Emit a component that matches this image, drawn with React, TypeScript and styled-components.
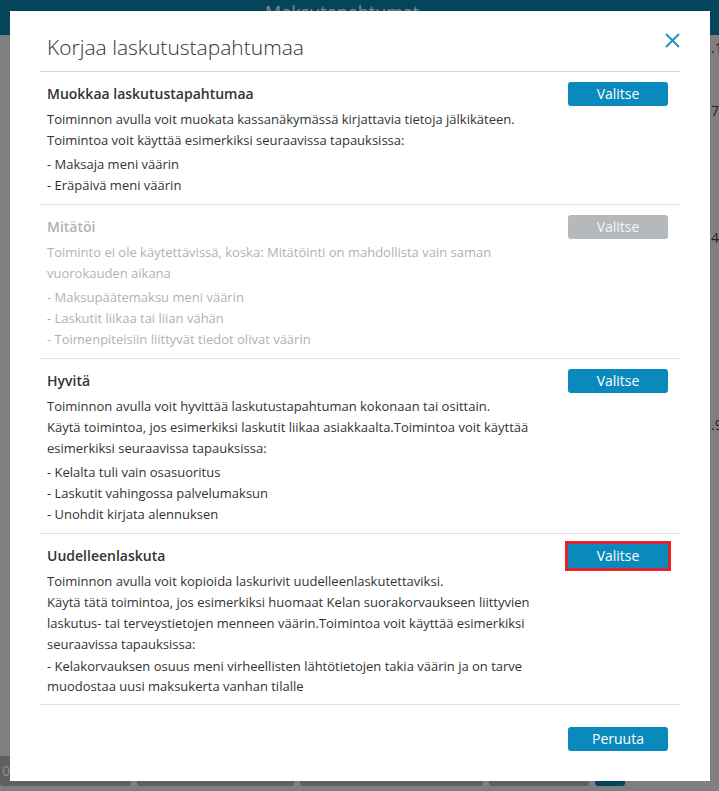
import { createGlobalStyle, styled } from 'styled-components'

const fontStack = `'Open Sans', 'Noto Sans', 'Liberation Sans', sans-serif`
const blue = '#0a89bc'

const GlobalStyle = createGlobalStyle`
  html, body {
    margin: 0;
    padding: 0;
    width: 719px;
    height: 791px;
    overflow: hidden;
    background: #7f7f7f;
  }
`

const Backdrop = styled.div`
  position: relative;
  width: 719px;
  height: 791px;
  overflow: hidden;
  display: flex;
  flex-direction: column;
  font-family: ${fontStack};
`

const TopBar = styled.div`
  height: 35px;
  background: #05455c;
  padding-left: 265px;
  box-sizing: border-box;
`

const TopTitle = styled.div`
  font-size: 18px;
  line-height: 24px;
  color: #7b8c94;
`

const BgBody = styled.div`
  flex: 1;
  display: flex;
  justify-content: flex-end;
`

const NumberColumn = styled.div`
  width: 8px;
  display: flex;
  flex-direction: column;
`

const NumberCell = styled.div<{ $height: number }>`
  height: ${({ $height }) => $height}px;
  display: flex;
  align-items: flex-end;
  font-size: 14px;
  line-height: 20px;
  color: #1f1f1f;
  white-space: nowrap;
`

const BottomBar = styled.div`
  height: 30px;
  margin-bottom: 5px;
  display: flex;
  gap: 6px;
`

const BarSegment = styled.div<{ $width: number; $teal?: boolean }>`
  width: ${({ $width }) => $width}px;
  background: ${({ $teal }) => ($teal ? '#05455c' : '#5e5f61')};
  border-radius: 0 0 3px 3px;
  color: #8e8e8e;
  font-size: 14px;
  line-height: 30px;
  text-indent: -6px;
  overflow: hidden;
`

const Dialog = styled.div`
  position: absolute;
  top: 11px;
  left: 10px;
  width: 700px;
  box-sizing: border-box;
  padding: 0 30px 30px;
  background: #fff;
  color: #333;
`

const DialogHeader = styled.div`
  display: flex;
  justify-content: space-between;
  align-items: flex-start;
  padding: 21px 0 9px 7px;
  border-bottom: 1px solid #d3d3d3;
`

const DialogTitle = styled.h2`
  margin: 0;
  font-size: 21px;
  font-weight: 300;
  line-height: 30px;
  color: #333;
`

const CloseButton = styled.button`
  border: 0;
  background: none;
  padding: 0;
  margin-top: 1px;
  width: 15px;
  height: 15px;
  cursor: pointer;
  display: flex;
`

const Option = styled.section<{ $disabled?: boolean }>`
  padding: 10px 12px 8px 7px;
  border-bottom: 1px solid #e2e2e2;
  color: ${({ $disabled }) => ($disabled ? '#b2b2b2' : '#333')};

  &:last-child {
    border-bottom-color: #d3d3d3;
  }
`

const OptionHeader = styled.div`
  display: flex;
  justify-content: space-between;
  align-items: center;
  height: 24px;
`

const OptionTitle = styled.h3`
  margin: 0;
  font-size: 14px;
  font-weight: 600;
  line-height: 24px;
`

const Description = styled.p`
  margin: 3px 0 0;
  max-width: 540px;
  font-size: 13px;
  line-height: 21px;
`

const Cases = styled.ul<{ $tight?: boolean }>`
  list-style: none;
  margin: ${({ $tight }) => ($tight ? '1px' : '3px')} 0 0;
  padding: 0;
  font-size: 13px;
  line-height: ${({ $tight }) => ($tight ? '20px' : '21px')};
`

const Button = styled.button<{ $highlighted?: boolean }>`
  width: 100px;
  height: 24px;
  border: 0;
  border-radius: ${({ $highlighted }) => ($highlighted ? '0' : '3px')};
  background: ${blue};
  color: #fff;
  font-family: ${fontStack};
  font-size: 14px;
  line-height: 24px;
  padding: 0;
  cursor: pointer;
  outline: ${({ $highlighted }) => ($highlighted ? '3px solid #e3222b' : 'none')};

  &:disabled {
    background: #b6b9bc;
    color: #f4f4f4;
    cursor: not-allowed;
  }
`

const DialogFooter = styled.div`
  display: flex;
  justify-content: flex-end;
  padding: 22px 12px 0 0;
`

type OptionData = {
  title: string
  lines: string[]
  cases: string[]
  disabled?: boolean
  highlighted?: boolean
}

const options: OptionData[] = [
  {
    title: 'Muokkaa laskutustapahtumaa',
    lines: [
      'Toiminnon avulla voit muokata kassanäkymässä kirjattavia tietoja jälkikäteen.',
      'Toimintoa voit käyttää esimerkiksi seuraavissa tapauksissa:',
    ],
    cases: ['- Maksaja meni väärin', '- Eräpäivä meni väärin'],
  },
  {
    title: 'Mitätöi',
    lines: [
      'Toiminto ei ole käytettävissä, koska: Mitätöinti on mahdollista vain saman',
      'vuorokauden aikana',
    ],
    cases: [
      '- Maksupäätemaksu meni väärin',
      '- Laskutit liikaa tai liian vähän',
      '- Toimenpiteisiin liittyvät tiedot olivat väärin',
    ],
    disabled: true,
  },
  {
    title: 'Hyvitä',
    lines: [
      'Toiminnon avulla voit hyvittää laskutustapahtuman kokonaan tai osittain.',
      'Käytä toimintoa, jos esimerkiksi laskutit liikaa asiakkaalta.Toimintoa voit käyttää',
      'esimerkiksi seuraavissa tapauksissa:',
    ],
    cases: [
      '- Kelalta tuli vain osasuoritus',
      '- Laskutit vahingossa palvelumaksun',
      '- Unohdit kirjata alennuksen',
    ],
  },
  {
    title: 'Uudelleenlaskuta',
    lines: [
      'Toiminnon avulla voit kopioida laskurivit uudelleenlaskutettaviksi.',
      'Käytä tätä toimintoa, jos esimerkiksi huomaat Kelan suorakorvaukseen liittyvien',
      'laskutus- tai terveystietojen menneen väärin.Toimintoa voit käyttää esimerkiksi',
      'seuraavissa tapauksissa:',
    ],
    cases: [
      '- Kelakorvauksen osuus meni virheellisten lähtötietojen takia väärin ja on tarve',
    ],
    highlighted: true,
  },
]

const numbers = [
  { text: '.10', height: 23 },
  { text: '7.50', height: 63 },
  { text: '4.00', height: 127 },
  { text: '.90', height: 187 },
]

const segments = [131, 157, 183, 100]

function CloseIcon() {
  return (
    <svg width="15" height="15" viewBox="0 0 15 15" fill="none">
      <path d="M1 1 L14 14 M14 1 L1 14" stroke="#1b8fc4" strokeWidth="1.8" />
    </svg>
  )
}

export default function App() {
  return (
    <>
      <GlobalStyle />
      <Backdrop>
        <TopBar>
          <TopTitle>Maksutapahtumat</TopTitle>
        </TopBar>
        <BgBody>
          <NumberColumn>
            {numbers.map((n) => (
              <NumberCell key={n.text} $height={n.height}>
                {n.text}
              </NumberCell>
            ))}
          </NumberColumn>
        </BgBody>
        <BottomBar>
          {segments.map((w, i) => (
            <BarSegment key={w} $width={w}>
              {i === 0 ? '10' : ''}
            </BarSegment>
          ))}
          <BarSegment $width={30} $teal />
        </BottomBar>

        <Dialog role="dialog">
          <DialogHeader>
            <DialogTitle>Korjaa laskutustapahtumaa</DialogTitle>
            <CloseButton aria-label="Sulje">
              <CloseIcon />
            </CloseButton>
          </DialogHeader>

          {options.map((o) => (
            <Option key={o.title} $disabled={o.disabled}>
              <OptionHeader>
                <OptionTitle>{o.title}</OptionTitle>
                <Button disabled={o.disabled} $highlighted={o.highlighted}>
                  Valitse
                </Button>
              </OptionHeader>
              <Description>
                {o.lines.map((l, i) => (
                  <span key={l}>
                    {i > 0 && <br />}
                    {l}
                  </span>
                ))}
              </Description>
              <Cases $tight={o.highlighted}>
                {o.cases.map((c) => (
                  <li key={c}>{c}</li>
                ))}
                {o.highlighted && <li>muodostaa uusi maksukerta vanhan tilalle</li>}
              </Cases>
            </Option>
          ))}

          <DialogFooter>
            <Button>Peruuta</Button>
          </DialogFooter>
        </Dialog>
      </Backdrop>
    </>
  )
}
